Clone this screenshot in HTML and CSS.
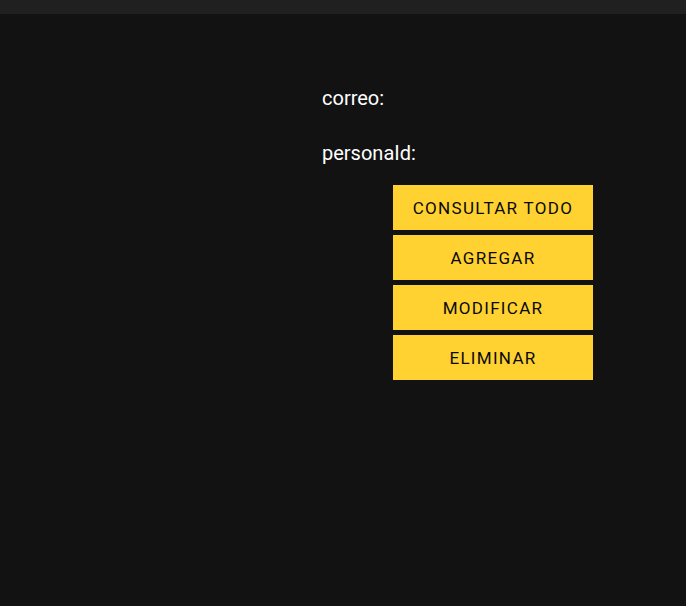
FILE: index.html
```html
<!DOCTYPE html>
<html lang="es">
<head>
<meta charset="utf-8">
<title>Personal</title>
<link rel="stylesheet" href="styles.css">
</head>
<body>
<header class="topbar"></header>
<main class="content">
  <form class="form">
    <label class="field">correo:</label>
    <label class="field">personaId:</label>
    <div class="actions">
      <button type="button" class="btn">Consultar todo</button>
      <button type="button" class="btn">Agregar</button>
      <button type="button" class="btn">Modificar</button>
      <button type="button" class="btn">Eliminar</button>
    </div>
  </form>
</main>
</body>
</html>
```
FILE: styles.css
```css
html, body {
  margin: 0;
  padding: 0;
  background: #121212;
  height: 100%;
}
body {
  font-family: Roboto, "Liberation Sans", sans-serif;
  color: #ffffff;
}
.topbar {
  height: 14px;
  background: #202020;
}
.content {
  padding: 72px 0 0 322px;
}
.form {
  display: flex;
  flex-direction: column;
  align-items: flex-start;
}
.field {
  display: block;
  font-size: 20px;
  line-height: 24px;
  color: #ffffff;
}
.field + .field {
  margin-top: 31px;
}
.actions {
  margin-top: 20px;
  margin-left: 71px;
  display: flex;
  flex-direction: column;
  gap: 5px;
}
.btn {
  width: 200px;
  height: 45px;
  border: none;
  border-radius: 0;
  background: #ffd232;
  color: #0a0a0a;
  font-family: Roboto, "Liberation Sans", sans-serif;
  font-size: 17px;
  letter-spacing: 1.3px;
  text-transform: uppercase;
  padding: 1px 0 0;
  cursor: pointer;
}
```
